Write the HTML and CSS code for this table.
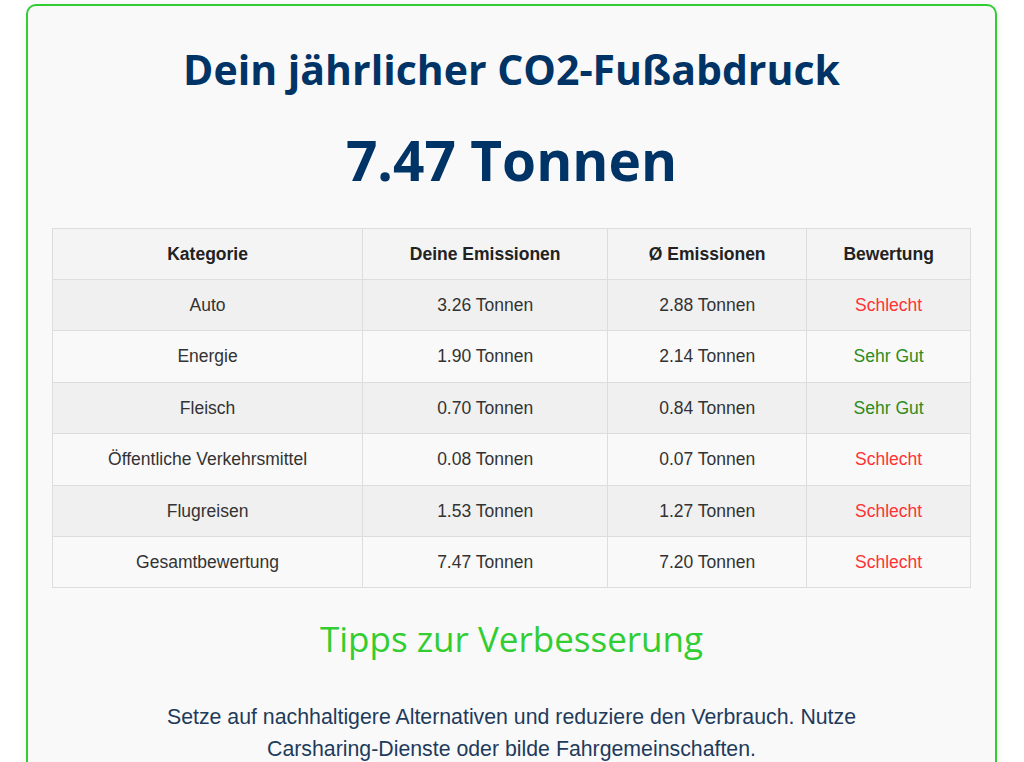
FILE: index.html
```html
<!DOCTYPE html>
<html lang="de">
<head>
<meta charset="utf-8">
<title>CO2-Fußabdruck</title>
<link rel="stylesheet" href="styles.css">
</head>
<body>
<div class="card">
  <h1 class="title">Dein jährlicher CO2-Fußabdruck</h1>
  <div class="total">7.47 Tonnen</div>
  <table class="results">
    <thead>
      <tr><th>Kategorie</th><th>Deine Emissionen</th><th>Ø Emissionen</th><th>Bewertung</th></tr>
    </thead>
    <tbody>
      <tr><td>Auto</td><td>3.26 Tonnen</td><td>2.88 Tonnen</td><td class="bad">Schlecht</td></tr>
      <tr><td>Energie</td><td>1.90 Tonnen</td><td>2.14 Tonnen</td><td class="good">Sehr Gut</td></tr>
      <tr><td>Fleisch</td><td>0.70 Tonnen</td><td>0.84 Tonnen</td><td class="good">Sehr Gut</td></tr>
      <tr><td>Öffentliche Verkehrsmittel</td><td>0.08 Tonnen</td><td>0.07 Tonnen</td><td class="bad">Schlecht</td></tr>
      <tr><td>Flugreisen</td><td>1.53 Tonnen</td><td>1.27 Tonnen</td><td class="bad">Schlecht</td></tr>
      <tr><td>Gesamtbewertung</td><td>7.47 Tonnen</td><td>7.20 Tonnen</td><td class="bad">Schlecht</td></tr>
    </tbody>
  </table>
  <h2 class="tips-title">Tipps zur Verbesserung</h2>
  <p class="tips-text">Setze auf nachhaltigere Alternativen und reduziere den Verbrauch. Nutze Carsharing-Dienste oder bilde Fahrgemeinschaften.</p>
  <p class="tips-text">Reduziere deinen Energieverbrauch im Haushalt und nutze Ökostrom.</p>
</div>
</body>
</html>
```
FILE: styles.css
```css
html, body {
  margin: 0;
  padding: 0;
  background: #ffffff;
}
body {
  padding: 4px 27px 20px 26px;
  font-family: "Liberation Sans", Arial, sans-serif;
}
.card {
  background: #f9f9f9;
  border: 2px solid #32cd32;
  border-radius: 10px;
  padding: 24px 24px 30px;
  box-shadow: 0 0 12px rgba(0, 0, 0, 0.06);
  text-align: center;
}
.title {
  font-family: "Open Sans", sans-serif;
  font-weight: 700;
  font-size: 41px;
  color: #003366;
  margin: 12px 0 0;
  line-height: 1.35;
}
.total {
  font-family: "Open Sans", sans-serif;
  font-weight: 700;
  font-size: 55px;
  color: #003366;
  margin: 26px 0 30px;
  line-height: 1.35;
}
.results {
  width: 100%;
  border-collapse: collapse;
  font-size: 17.5px;
  color: #333333;
}
.results th, .results td {
  border: 1px solid #dddddd;
  padding: 15px;
  text-align: center;
  line-height: 20.4px;
}
.results th {
  background: #f4f4f4;
  font-weight: 700;
  color: #222222;
}
.results tbody tr:nth-child(odd) td {
  background: #f0f0f0;
}
.results tbody tr:nth-child(even) td {
  background: #f9f9f9;
}
.bad {
  color: #ff3333;
}
.good {
  color: #2e8b22;
}
.tips-title {
  font-family: "Open Sans", sans-serif;
  font-weight: 500;
  font-size: 35px;
  color: #32cd32;
  margin: 26px 0 0;
  line-height: 1.4;
}
.tips-text {
  font-size: 21.3px;
  line-height: 32px;
  color: #1f3b5c;
  max-width: 720px;
  margin: 38px auto 0;
}
```
